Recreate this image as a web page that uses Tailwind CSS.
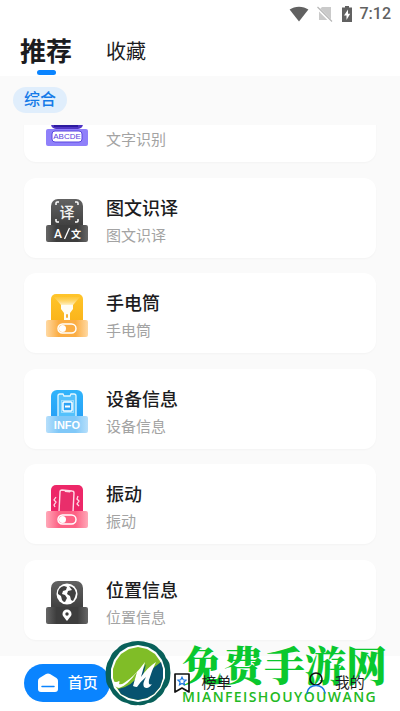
<!DOCTYPE html>
<html lang="zh-CN">
  <head>
    <meta charset="UTF-8" />
    <meta name="viewport" content="width=device-width, initial-scale=1.0" />
    <title>推荐</title>
    <!-- Tailwind CSS -->
    <script src="https://cdn.jsdelivr.net/npm/@tailwindcss/browser@4"></script>
  </head>
  <body class="bg-white font-['Roboto','Noto_Sans_CJK_SC',sans-serif] text-[#1c1c1e]">
    <div class="flex h-screen flex-col overflow-hidden">
      <!-- Status bar -->
      <div class="flex h-7 shrink-0 items-center justify-end pr-[9px] text-[#616161]">
        <svg class="mr-2 h-4 w-5" viewBox="0 0 20 16" fill="currentColor">
          <path d="M.6 3.6C5.5-.3 14.500-.3 19.400 3.600L10 15.500z" />
        </svg>
        <svg class="mr-[9px] h-4 w-4" viewBox="0 0 16 16">
          <path d="M5 1h9v13H2V4z" fill="#cacaca" />
          <path d="M0 1.500 14.500 16" stroke="#fff" stroke-width="3" />
          <path d="M.5 1 15 15.500" stroke="#b8b8b8" stroke-width="1.300" />
        </svg>
        <svg class="mr-2 h-4 w-[10px]" viewBox="0 0 10 16">
          <path d="M3 0h4v1.500h3V16H0V1.500h3z" fill="currentColor" />
          <path d="M6 3.500 2 9.500h2.500V14L8.200 7.800H6z" fill="#fff" />
        </svg>
        <span class="text-base leading-4 font-medium">7:12</span>
      </div>

      <!-- Tabs -->
      <nav class="flex h-12 shrink-0 items-start gap-[34px] px-5">
        <button class="mt-[3px] flex flex-col items-center text-[26px] leading-[42px] font-bold">
          推荐
          <span class="-mt-[3px] h-[5px] w-[19px] rounded-full bg-[#0a84ff]"></span>
        </button>
        <button class="mt-[3px] text-xl leading-[42px]">收藏</button>
      </nav>

      <main class="flex min-h-0 flex-1 flex-col bg-[#fafafa]">
        <!-- Category -->
        <div class="flex shrink-0 px-[13px] pt-[11px] pb-3">
          <button class="h-[26px] rounded-full bg-[#e0eefc] px-[11px] text-base leading-[26px] font-medium text-[#167be8]">综合</button>
        </div>

        <!-- Tool list, scrolled to the end -->
        <div class="flex min-h-0 flex-1 flex-col justify-end overflow-hidden px-6 pb-4">
          <ul class="flex h-[558px] shrink-0 flex-col justify-between">
            <li class="flex h-20 items-center gap-[17px] rounded-xl bg-white px-[21px] pt-2 shadow-xs shadow-black/3">
              <svg class="h-12 w-[44px] shrink-0" viewBox="0 0 44 48">
                <rect x="6" y="1" width="32" height="26" rx="5" fill="#4f35c4" />
                <path d="M10 22v2h10v-2h2v2h10v-2" fill="none" stroke="#2c1aa0" stroke-width="2" />
                <rect x="1" y="27" width="42" height="17" rx="2" fill="#8f80fa" />
                <rect x="7" y="29" width="30" height="11" rx="3" fill="#fff" stroke="#5b45df" />
                <text x="22" y="37" text-anchor="middle" font-size="8" font-family="Liberation Sans" fill="#5b3fe0">ABCDE</text>
              </svg>
              <div>
                <h2 class="text-lg leading-7 font-medium">文字识别</h2>
                <p class="text-[15px] leading-[26px] text-[#a3a3a3]">文字识别</p>
              </div>
            </li>
            <li class="flex h-20 items-center gap-[17px] rounded-xl bg-white px-[21px] pt-2 shadow-xs shadow-black/3">
              <svg class="h-12 w-[44px] shrink-0" viewBox="0 0 44 48">
                <defs>
                  <linearGradient id="dark" x2="0" y2="1"><stop stop-color="#626262" /><stop offset="1" stop-color="#303030" /></linearGradient>
                  <linearGradient id="plate"><stop stop-color="#666" /><stop offset=".25" stop-color="#3d3d3d" /><stop offset=".75" stop-color="#3d3d3d" /><stop offset="1" stop-color="#666" /></linearGradient>
                </defs>
                <rect x="6" y="1" width="32" height="39" rx="7" fill="url(#dark)" />
                <path d="M11 7V5q0-1 1-1h2m16 0h2q1 0 1 1v2M11 21v2q0 1 1 1h2m16 0h2q1 0 1-1v-2" fill="none" stroke="#fff" stroke-width="1.500" />
                <text x="22" y="20" text-anchor="middle" font-size="15" font-weight="500" font-family="Noto Sans CJK SC" fill="#f3f3f3">译</text>
                <rect x="1" y="27" width="42" height="17" rx="2" fill="url(#plate)" />
                <text x="9" y="40" font-size="12" font-weight="500" font-family="Roboto" fill="#fff">A</text>
                <path d="m19.500 41 5-11" stroke="#fff" stroke-width="1.300" />
                <text x="26" y="40" font-size="10" font-weight="700" font-family="Noto Sans CJK SC" fill="#fff">文</text>
              </svg>
              <div>
                <h2 class="text-lg leading-7 font-medium">图文识译</h2>
                <p class="text-[15px] leading-[26px] text-[#a3a3a3]">图文识译</p>
              </div>
            </li>
            <li class="flex h-20 items-center gap-[17px] rounded-xl bg-white px-[21px] pt-2 shadow-xs shadow-black/3">
              <svg class="h-12 w-[44px] shrink-0" viewBox="0 0 44 48">
                <defs>
                  <linearGradient id="amber" x2="0" y2="1"><stop stop-color="#ffc52b" /><stop offset="1" stop-color="#f8ad14" /></linearGradient>
                  <linearGradient id="beam" x2="0" y2="1"><stop stop-color="#ffd35c" stop-opacity=".3" /><stop offset="1" stop-color="#fff1c5" /></linearGradient>
                  <linearGradient id="orange"><stop stop-color="#ffd9a3" /><stop offset=".3" stop-color="#fbad43" /><stop offset=".7" stop-color="#fbad43" /><stop offset="1" stop-color="#ffd9a3" /></linearGradient>
                </defs>
                <rect x="6" y="1" width="32" height="39" rx="5" fill="url(#amber)" />
                <path d="M9 4h26l-7 8H16z" fill="url(#beam)" />
                <path d="M16 12h12v4l-3 4v8h-6v-8l-3-4z" fill="#fffdf4" />
                <rect x="21" y="21" width="2" height="4" rx="1" fill="#f6b03b" />
                <rect x="1" y="27" width="42" height="17" rx="2" fill="url(#orange)" />
                <rect x="13" y="31" width="18" height="9" rx="4.500" fill="none" stroke="#fff" stroke-width="1.500" />
                <circle cx="17.500" cy="35.500" r="3.500" fill="#fff" />
              </svg>
              <div>
                <h2 class="text-lg leading-7 font-medium">手电筒</h2>
                <p class="text-[15px] leading-[26px] text-[#a3a3a3]">手电筒</p>
              </div>
            </li>
            <li class="flex h-20 items-center gap-[17px] rounded-xl bg-white px-[21px] pt-2 shadow-xs shadow-black/3">
              <svg class="h-12 w-[44px] shrink-0" viewBox="0 0 44 48">
                <defs>
                  <linearGradient id="sky" x2="0" y2="1"><stop stop-color="#31b4fb" /><stop offset="1" stop-color="#2299f4" /></linearGradient>
                  <linearGradient id="ice"><stop stop-color="#b7dffb" /><stop offset=".3" stop-color="#80c8f8" /><stop offset=".7" stop-color="#80c8f8" /><stop offset="1" stop-color="#b7dffb" /></linearGradient>
                </defs>
                <rect x="6" y="1" width="32" height="39" rx="6" fill="url(#sky)" />
                <path d="M13 28V7q0-2 2-2h3l1 2h6l1-2h3q2 0 2 2v21" fill="#53c1fc" stroke="#e4f7ff" stroke-width="1.300" />
                <rect x="18" y="13" width="9" height="9" rx="1" fill="#2ba2f6" stroke="#fff" stroke-width="1.500" />
                <path d="M20 17.500h5" stroke="#fff" stroke-width="2" />
                <rect x="16.500" y="11.500" width="12" height="12" fill="none" stroke="#fff" stroke-width=".8" stroke-dasharray="1 1" />
                <rect x="1" y="27" width="42" height="17" rx="2" fill="url(#ice)" />
                <text x="22" y="40" text-anchor="middle" font-size="11" font-weight="700" font-family="Liberation Sans" fill="#fff">INFO</text>
              </svg>
              <div>
                <h2 class="text-lg leading-7 font-medium">设备信息</h2>
                <p class="text-[15px] leading-[26px] text-[#a3a3a3]">设备信息</p>
              </div>
            </li>
            <li class="flex h-20 items-center gap-[17px] rounded-xl bg-white px-[21px] pt-2 shadow-xs shadow-black/3">
              <svg class="h-12 w-[44px] shrink-0" viewBox="0 0 44 48">
                <defs>
                  <linearGradient id="pink"><stop stop-color="#ffa8b8" /><stop offset=".3" stop-color="#fd6285" /><stop offset=".7" stop-color="#fd6285" /><stop offset="1" stop-color="#ffa8b8" /></linearGradient>
                </defs>
                <rect x="6" y="1" width="32" height="39" rx="5" fill="#ed2768" />
                <path d="m14 28 1-20q0-2 2-2l10 1q2 0 2 2l-1 19" fill="#e92e6b" stroke="#ffdbe6" stroke-width="1.400" />
                <path d="m19 6 1 2 5 .4 1-1.400" fill="#ffdbe6" />
                <path d="m11 13-2 3 2 2-2 3 1 2M33 12l-1 3 2 2-2 3 2 2" fill="none" stroke="#ffdbe6" stroke-width="1.300" />
                <rect x="1" y="27" width="42" height="17" rx="2" fill="url(#pink)" />
                <rect x="13" y="31" width="18" height="9" rx="4.500" fill="none" stroke="#fff" stroke-width="1.500" />
                <circle cx="17.500" cy="35.500" r="3.500" fill="#fff" />
              </svg>
              <div>
                <h2 class="text-lg leading-7 font-medium">振动</h2>
                <p class="text-[15px] leading-[26px] text-[#a3a3a3]">振动</p>
              </div>
            </li>
            <li class="flex h-20 items-center gap-[17px] rounded-xl bg-white px-[21px] pt-2 shadow-xs shadow-black/3">
              <svg class="h-12 w-[44px] shrink-0" viewBox="0 0 44 48">
                <rect x="6" y="1" width="32" height="39" rx="7" fill="url(#dark)" />
                <circle cx="22" cy="14" r="10.500" fill="#fff" />
                <path d="M13 12q1-5 6-6l3 1-1 3-3 1-1 3 3 1 2 3-2 4q-2 0-3-2l-1-4-3-2zM24 6q6 1 7 7l-1 4-2 4-2-1-1-4-3-2 1-3 4-1z" fill="#404040" />
                <rect x="1" y="27" width="42" height="17" rx="2" fill="url(#plate)" />
                <path d="M22 41c-3-4-4.500-5-4.500-7a4.500 4.500 0 0 1 9 0c0 2-1.500 3-4.500 7z" fill="#fff" />
                <circle cx="22" cy="34" r="1.700" fill="#3d3d3d" />
              </svg>
              <div>
                <h2 class="text-lg leading-7 font-medium">位置信息</h2>
                <p class="text-[15px] leading-[26px] text-[#a3a3a3]">位置信息</p>
              </div>
            </li>
          </ul>
        </div>
      </main>

      <!-- Bottom navigation -->
      <footer class="relative h-[55px] shrink-0 bg-white pt-2">
        <!-- Site mark over the bar -->
        <div class="absolute bottom-[6px] left-[182px] whitespace-nowrap">
          <p class="font-['Noto_Serif_CJK_SC','Noto_Sans_CJK_SC',serif] text-[41px] leading-[50px] font-black text-[#0ac82e]">免费手游网</p>
          <p class="font-['Open_Sans',sans-serif] text-sm leading-4 font-semibold tracking-widest text-[#23b923]">MIANFEISHOUYOUWANG</p>
        </div>
        <svg class="absolute bottom-[5px] left-[105px] z-20 h-[66px] w-[66px]" viewBox="0 0 66 66">
          <path d="M33 1Q39 1 44 3 50 4 54 9 59 12 61 18 65 22 65 28 66 33 65 39 64 45 60 49 58 55 53 58 49 63 43 63 38 66 33 65 27 66 22 63 16 62 12 58 7 54 5 49 1 44 1 39 0 33 1 28 2 22 5 18 7 12 12 9 16 4 22 3 27 1 33 1z" fill="#08605a" />
          <path d="m33 5 10 2 8 5 6 8 3 9v9l-4 10-6 7-7 5-10 2-10-2-8-5-6-7-3-10v-9l3-9 6-8 8-5z" fill="#fff" />
          <path d="m33 7 9 2 8 5 5 7 3 8v9l-3 9-6 7-7 4-9 2-9-2-8-4-5-7-3-9v-9l3-8 5-7 8-5z" fill="#80bd27" />
          <path d="m56 22 2 7v9l-3 9-6 7-7 4-9 2-9-2-8-4-3-5q14-2 23-17l5-8-3 12 9-7z" fill="#07536f" />
          <path d="M8 41q3 2 6 0 1 0 0 3 2 1 5-1 10-6 21-21-2 8-4 15 6-9 15-15-4 8-7 18-1 6 3 4-4 6-8 3-2-3 2-10-6 5-9 10-2 0-4-1l4-14Q22 46 14 48 9 47 8 41z" fill="#fff" />
        </svg>

        <nav class="relative z-10 grid grid-cols-3 justify-items-center text-[15px] leading-[38px]">
          <a href="#" class="flex h-[38px] items-center gap-[9px] rounded-full bg-[#0a84ff] pr-3 pl-[13px] font-medium text-white">
            <svg class="h-[22px] w-[22px]" viewBox="0 0 22 22">
              <path d="M9 2q2-1 4 0l6.500 4q1.500 1 1.500 3v8q0 3-3 3H4q-3 0-3-3V9q0-2 1.500-3z" fill="#fff" />
              <path d="M5 14.500h12" stroke="#0a84ff" stroke-width="1.500" stroke-linecap="round" />
            </svg>
            首页
          </a>
          <a href="#" class="flex items-center gap-[9px] pl-1">
            <svg class="h-[22px] w-[20px]" viewBox="0 0 20 22" fill="none">
              <path d="M3 2h14v18l-7-4-7 4z" stroke="#111" stroke-width="1.700" stroke-linejoin="round" />
              <path d="m10 5.200 1.200 2.600 2.800.3-2.100 1.900.6 2.800-2.500-1.400-2.500 1.400.6-2.800L6 8.100l2.800-.3z" stroke="#1976e0" stroke-width="1.200" />
            </svg>
            榜单
          </a>
          <a href="#" class="flex items-center gap-[9px] pl-1">
            <svg class="h-[22px] w-[20px]" viewBox="0 0 20 22" fill="none" stroke-width="1.600" stroke-linecap="round">
              <circle cx="10" cy="7" r="6" stroke="#111" />
              <path d="M1 21c1-10 17-10 18 0" stroke="#1976e0" />
            </svg>
            我的
          </a>
        </nav>
      </footer>
    </div>
  </body>
</html>
